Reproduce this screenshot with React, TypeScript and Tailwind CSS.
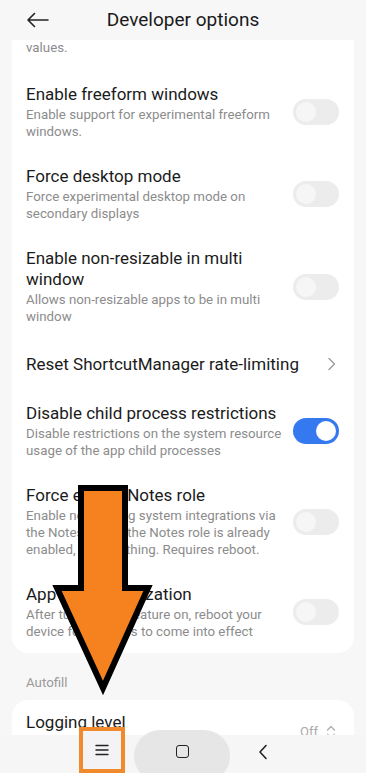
import React from 'react';

type Row = {
  title: string;
  sub?: string;
  kind: 'toggle' | 'chevron';
  on?: boolean;
};

const rows: Row[] = [
  { title: 'Enable freeform windows', sub: 'Enable support for experimental freeform windows.', kind: 'toggle' },
  { title: 'Force desktop mode', sub: 'Force experimental desktop mode on secondary displays', kind: 'toggle' },
  { title: 'Enable non-resizable in multi window', sub: 'Allows non-resizable apps to be in multi window', kind: 'toggle' },
  { title: 'Reset ShortcutManager rate-limiting', kind: 'chevron' },
  { title: 'Disable child process restrictions', sub: 'Disable restrictions on the system resource usage of the app child processes', kind: 'toggle', on: true },
  { title: 'Force enable Notes role', sub: 'Enable note-taking system integrations via the Notes role. If the Notes role is already enabled, does nothing. Requires reboot.', kind: 'toggle' },
  { title: 'App load optimization', sub: 'After turning this feature on, reboot your device for changes to come into effect', kind: 'toggle' },
];

const Toggle: React.FC<{ on?: boolean }> = ({ on }) => (
  <div
    className={`w-[46px] h-[26px] rounded-full flex items-center px-[3px] shrink-0 ${
      on ? 'bg-[#3479ef] justify-end' : 'bg-[#ececec] justify-start'
    }`}
  >
    <div className={`w-[20px] h-[20px] rounded-full ${on ? 'bg-white' : 'bg-[#f6f6f6]'}`}></div>
  </div>
);

const Chevron = () => (
  <svg width="10" height="14" viewBox="0 0 10 14" className="shrink-0 mr-[2px]">
    <path d="M2 1.5 L7.5 7 L2 12.5" fill="none" stroke="#9b9b9b" strokeWidth="1.4" strokeLinecap="round" strokeLinejoin="round" />
  </svg>
);

const SettingRow: React.FC<{ row: Row }> = ({ row }) => {
  if (row.kind === 'chevron') {
    return (
      <div className="flex items-center justify-between pl-[14px] pr-[15px] h-[52px]">
        <span className="text-[17px] leading-[21px] text-[#1b1b1b]">{row.title}</span>
        <Chevron />
      </div>
    );
  }
  return (
    <div className="flex items-center justify-between pl-[14px] pr-[15px] py-[13px] gap-[8px]">
      <div className="flex flex-col flex-1 min-w-0 pr-[2px]">
        <span className="text-[17px] leading-[21px] text-[#1b1b1b]">{row.title}</span>
        <span className="text-[13.3px] leading-[17px] text-[#8c8c8c] mt-[1px]">{row.sub}</span>
      </div>
      <Toggle on={row.on} />
    </div>
  );
};

export default function App() {
  return (
    <div
      className="relative w-[366px] h-[773px] overflow-hidden bg-[#f7f7f7] flex flex-col"
      style={{ fontFamily: 'Roboto, "Noto Sans", sans-serif' }}
    >
      {/* Header */}
      <div className="h-[40px] shrink-0 flex items-center relative">
        <svg width="24" height="16" viewBox="0 0 24 16" className="ml-[26px]">
          <path d="M22 8 H2 M8.5 1.5 L2 8 L8.5 14.5" fill="none" stroke="#222" strokeWidth="1.6" strokeLinecap="round" strokeLinejoin="round" />
        </svg>
        <span className="absolute left-0 right-0 text-center text-[19px] text-[#1a1a1a] pointer-events-none">
          Developer options
        </span>
      </div>

      {/* Content */}
      <div className="flex-1 overflow-hidden">
        <div className="mx-[12px] bg-white rounded-b-[16px]">
          <div className="pl-[14px] text-[13.3px] leading-[14px] text-[#8c8c8c] pt-[1px] pb-[29px]">values.</div>
          <div className="-mt-[13px]">
            {rows.map((r) => (
              <SettingRow key={r.title} row={r} />
            ))}
          </div>
        </div>

        <div className="pl-[26px] pt-[21px] pb-[9px] text-[13.3px] leading-[17px] text-[#9a9a9a]">Autofill</div>

        <div className="mx-[12px] bg-white rounded-t-[16px] h-[80px] flex items-start justify-between pl-[14px] pr-[18px] pt-[12px]">
          <span className="text-[17px] leading-[21px] text-[#1b1b1b]">Logging level</span>
          <div className="flex items-center gap-[8px] mt-[10px]">
            <span className="text-[13px] text-[#aaaaaa]">Off</span>
            <svg width="10" height="14" viewBox="0 0 10 14">
              <path d="M1.5 5 L5 1.5 L8.5 5" fill="none" stroke="#aaa" strokeWidth="1.2" strokeLinecap="round" strokeLinejoin="round" />
              <path d="M1.5 9 L5 12.5 L8.5 9" fill="none" stroke="#ccc" strokeWidth="1.2" strokeLinecap="round" strokeLinejoin="round" />
            </svg>
          </div>
        </div>
      </div>

      {/* Navigation bar overlay */}
      <div className="absolute left-0 right-0 bottom-0 h-[38px] bg-[#f6f6f6]"></div>
      <div className="absolute left-0 right-0 bottom-0 h-[46px] flex items-start">
        <div className="ml-[79px] w-[46px] h-[46px] border-[4px] border-[#f08a2c] bg-[#f3f3f5] flex items-center justify-center">
          <svg width="14" height="12" viewBox="0 0 14 12">
            <path d="M1 1.5 H13 M1 6 H13 M1 10.5 H13" stroke="#222" strokeWidth="1.4" strokeLinecap="round" />
          </svg>
        </div>
        <div className="ml-[9px] mt-[3px] w-[96px] h-[52px] rounded-full bg-[#e6e6e6] flex items-start justify-center pt-[15px]">
          <div className="w-[13px] h-[13px] border-[1.6px] border-[#222] rounded-[3px]"></div>
        </div>
        <div className="ml-[28px] mt-[3px] h-[43px] flex items-center">
          <svg width="10" height="16" viewBox="0 0 10 16" className="mt-[1px]">
            <path d="M8 1.5 L2 8 L8 14.5" fill="none" stroke="#222" strokeWidth="1.6" strokeLinecap="round" strokeLinejoin="round" />
          </svg>
        </div>
      </div>

      {/* Annotation arrow */}
      <svg className="absolute left-0 top-0 pointer-events-none" width="366" height="773" viewBox="0 0 366 773">
        <polygon
          points="81,488 125,488 125,588 148,588 103,688 57,588 81,588"
          fill="#f5821f"
          stroke="#000"
          strokeWidth="6"
          strokeLinejoin="miter"
        />
      </svg>
    </div>
  );
}
